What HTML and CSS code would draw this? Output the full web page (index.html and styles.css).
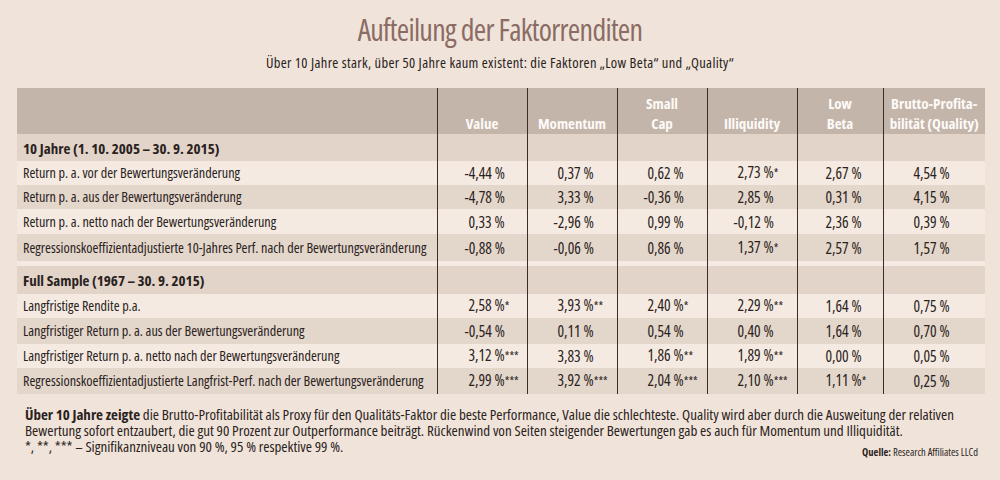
FILE: index.html
```html
<!DOCTYPE html>
<html lang="de">
<head>
<meta charset="utf-8">
<title>Aufteilung der Faktorrenditen</title>
<link rel="stylesheet" href="styles.css">
</head>
<body>
<div class="page">
  <h1 class="title">Aufteilung der Faktorrenditen</h1>
  <p class="subtitle">Über 10 Jahre stark, über 50 Jahre kaum existent: die Faktoren „Low Beta“ und „Quality“</p>
  <table class="grid">
    <colgroup>
      <col class="c-label"><col class="c-n"><col class="c-n"><col class="c-n"><col class="c-n"><col class="c-lb"><col class="c-q">
    </colgroup>
    <thead>
      <tr class="head">
        <th></th>
        <th>Value</th>
        <th>Momentum</th>
        <th>Small<br>Cap</th>
        <th>Illiquidity</th>
        <th>Low<br>Beta</th>
        <th>Brutto-Profita-<br>bilität (Quality)</th>
      </tr>
    </thead>
    <tbody>
      <tr class="sec"><td>10 Jahre (1. 10. 2005&thinsp;–&thinsp;30. 9. 2015)</td><td></td><td></td><td></td><td></td><td></td><td></td></tr>
      <tr class="lt r24"><td>Return p. a. vor der Bewertungsveränderung</td><td><span class="minus">-</span>4,44 %</td><td>0,37 %</td><td>0,62 %</td><td>2,73 %<span class="sig">*</span></td><td>2,67 %</td><td>4,54 %</td></tr>
      <tr class="dk r24"><td>Return p. a. aus der Bewertungsveränderung</td><td><span class="minus">-</span>4,78 %</td><td>3,33 %</td><td><span class="minus">-</span>0,36 %</td><td>2,85 %</td><td>0,31 %</td><td>4,15 %</td></tr>
      <tr class="lt r25"><td>Return p. a. netto nach der Bewertungsveränderung</td><td>0,33 %</td><td><span class="minus">-</span>2,96 %</td><td>0,99 %</td><td><span class="minus">-</span>0,12 %</td><td>2,36 %</td><td>0,39 %</td></tr>
      <tr class="dk r27"><td>Regressionskoeffizientadjustierte 10-Jahres Perf. nach der Bewertungsveränderung</td><td><span class="minus">-</span>0,88 %</td><td><span class="minus">-</span>0,06 %</td><td>0,86 %</td><td>1,37 %<span class="sig">*</span></td><td>2,57 %</td><td>1,57 %</td></tr>
      <tr class="gap"><td></td><td></td><td></td><td></td><td></td><td></td><td></td></tr>
      <tr class="sec sec-b"><td>Full Sample (1967&thinsp;–&thinsp;30. 9. 2015)</td><td></td><td></td><td></td><td></td><td></td><td></td></tr>
      <tr class="lt r24"><td>Langfristige Rendite p.a.</td><td>2,58 %<span class="sig">*</span></td><td>3,93 %<span class="sig">**</span></td><td>2,40 %<span class="sig">*</span></td><td>2,29 %<span class="sig">**</span></td><td>1,64 %</td><td>0,75 %</td></tr>
      <tr class="dk r26"><td>Langfristiger Return p. a. aus der Bewertungsveränderung</td><td><span class="minus">-</span>0,54 %</td><td>0,11 %</td><td>0,54 %</td><td>0,40 %</td><td>1,64 %</td><td>0,70 %</td></tr>
      <tr class="lt r24"><td>Langfristiger Return p. a. netto nach der Bewertungsveränderung</td><td>3,12 %<span class="sig">***</span></td><td>3,83 %</td><td>1,86 %<span class="sig">**</span></td><td>1,89 %<span class="sig">**</span></td><td>0,00 %</td><td>0,05 %</td></tr>
      <tr class="dk r26"><td>Regressionskoeffizientadjustierte Langfrist-Perf. nach der Bewertungsveränderung</td><td>2,99 %<span class="sig">***</span></td><td>3,92 %<span class="sig">***</span></td><td>2,04 %<span class="sig">***</span></td><td>2,10 %<span class="sig">***</span></td><td>1,11 %<span class="sig">*</span></td><td>0,25 %</td></tr>
    </tbody>
  </table>
  <div class="notes">
    <p class="note"><strong>Über 10 Jahre zeigte</strong> die Brutto-Profitabilität als Proxy für den Qualitäts-Faktor die beste Performance, Value die schlechteste. Quality wird aber durch die Ausweitung der relativen<br>Bewertung sofort entzaubert, die gut 90 Prozent zur Outperformance beiträgt. Rückenwind von Seiten steigender Bewertungen gab es auch für Momentum und Illiquidität.</p>
    <div class="foot">
      <span class="stars">*, **, *** – Signifikanzniveau von 90 %, 95 % respektive 99 %.</span>
      <span class="source"><strong>Quelle:</strong> Research Affiliates LLCd</span>
    </div>
  </div>
</div>
</body>
</html>
```

FILE: styles.css
```css
html, body {
  margin: 0;
  padding: 0;
}
body {
  background: #f0e4da;
  color: #2a2220;
  font-family: "Open Sans", "Roboto Condensed", "Liberation Sans", sans-serif;
  font-stretch: condensed;
}
.page {
  width: 1000px;
  height: 480px;
  overflow: hidden;
}
.title {
  margin: 0;
  padding-top: 12px;
  height: 36px;
  text-align: center;
  font-size: 30px;
  line-height: 36px;
  font-weight: normal;
  color: #8b6c65;
  letter-spacing: -0.7px;
}
.subtitle {
  margin: 6px 0 0 0;
  height: 18px;
  text-align: center;
  font-size: 14.5px;
  line-height: 18px;
  letter-spacing: 0.35px;
}
.grid {
  margin: 16px 0 0 17px;
  width: 968px;
  border-collapse: collapse;
  table-layout: fixed;
  font-size: 15.5px;
}
.c-label { width: 420px; }
.c-n { width: 90px; }
.c-lb { width: 86px; }
.c-q { width: 102px; }

.grid td, .grid th {
  padding: 0;
  white-space: nowrap;
  line-height: 18px;
}
.grid td + td, .grid th + th {
  border-left: 1px solid #3b2c27;
}
.grid td + td {
  padding-left: 30px;
  text-align: left;
}
.grid td:nth-child(2) { padding-left: 31px; }
.grid td:nth-child(6) { padding-left: 28px; }

.head th {
  background: #c4b5ab;
  color: #fdfaf7;
  height: 45px;
  vertical-align: bottom;
  padding-bottom: 1px;
  font-size: 15px;
  line-height: 20px;
  font-weight: bold;
  text-align: center;
}
.sec td {
  background: #e2d4c9;
  height: 27px;
  font-weight: bold;
}
.sec-b td { height: 28px; }
.grid tr td:first-child {
  padding-left: 6px;
  font-size: 14.2px;
}
.grid tr.sec td:first-child { font-size: 15px; }
.lt td { background: #f4eae1; }
.dk td { background: #e3d6cb; }
.r24 td { height: 24px; }
.r25 td { height: 25px; }
.r26 td { height: 26px; }
.r27 td { height: 27px; }
.gap td { height: 5px; background: #f4eae1; }

.minus {
  margin-left: -4px;
}
.sig {
  font-size: 12px;
}

.notes {
  margin: 12px 0 0 25px;
  width: 955px;
  font-size: 15px;
  line-height: 16px;
}
.note {
  margin: 0;
  white-space: nowrap;
}
.foot {
  display: flex;
  justify-content: space-between;
  align-items: flex-start;
}
.source {
  font-size: 10.5px;
  margin-top: 6px;
  margin-right: 2px;
}
```
